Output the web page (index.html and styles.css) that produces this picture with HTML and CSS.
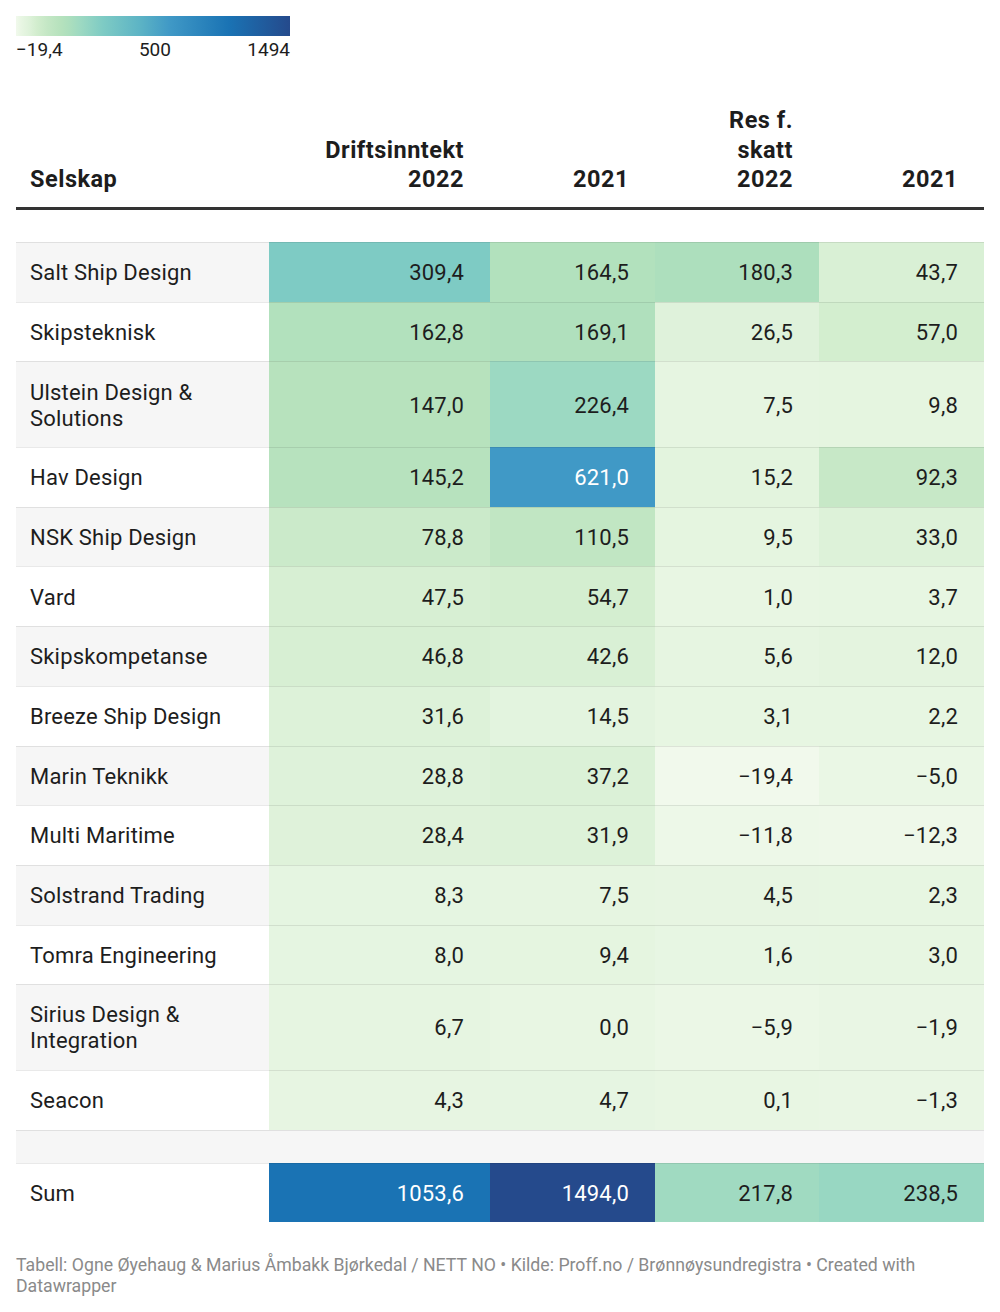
FILE: index.html
```html
<!DOCTYPE html>
<html lang="no">
<head>
<meta charset="utf-8">
<title>Skipsdesign – driftsinntekt og resultat</title>
<link rel="stylesheet" href="styles.css">
</head>
<body>
<div class="chart">
  <div class="legend">
    <div class="legend-bar"></div>
    <div class="legend-labels"><span>−19,4</span><span>500</span><span>1494</span></div>
  </div>

  <table class="heat">
    <colgroup>
      <col class="c-name"><col class="c-wide"><col class="c-num"><col class="c-num2"><col class="c-num">
    </colgroup>
    <thead>
      <tr>
        <th class="name">Selskap</th>
        <th class="num">Driftsinntekt<br>2022</th>
        <th class="num">2021</th>
        <th class="num">Res f.<br>skatt<br>2022</th>
        <th class="num">2021</th>
      </tr>
    </thead>
    <tbody>
      <tr class="gap"><td colspan="5"></td></tr>
      <tr class="alt"><td class="name">Salt Ship Design</td><td class="val" data-v="309.4">309,4</td><td class="val" data-v="164.5">164,5</td><td class="val" data-v="180.3">180,3</td><td class="val" data-v="43.7">43,7</td></tr>
      <tr><td class="name">Skipsteknisk</td><td class="val" data-v="162.8">162,8</td><td class="val" data-v="169.1">169,1</td><td class="val" data-v="26.5">26,5</td><td class="val" data-v="57.0">57,0</td></tr>
      <tr class="alt"><td class="name">Ulstein Design &amp;<br>Solutions</td><td class="val" data-v="147.0">147,0</td><td class="val" data-v="226.4">226,4</td><td class="val" data-v="7.5">7,5</td><td class="val" data-v="9.8">9,8</td></tr>
      <tr><td class="name">Hav Design</td><td class="val" data-v="145.2">145,2</td><td class="val" data-v="621.0">621,0</td><td class="val" data-v="15.2">15,2</td><td class="val" data-v="92.3">92,3</td></tr>
      <tr class="alt"><td class="name">NSK Ship Design</td><td class="val" data-v="78.8">78,8</td><td class="val" data-v="110.5">110,5</td><td class="val" data-v="9.5">9,5</td><td class="val" data-v="33.0">33,0</td></tr>
      <tr><td class="name">Vard</td><td class="val" data-v="47.5">47,5</td><td class="val" data-v="54.7">54,7</td><td class="val" data-v="1.0">1,0</td><td class="val" data-v="3.7">3,7</td></tr>
      <tr class="alt"><td class="name">Skipskompetanse</td><td class="val" data-v="46.8">46,8</td><td class="val" data-v="42.6">42,6</td><td class="val" data-v="5.6">5,6</td><td class="val" data-v="12.0">12,0</td></tr>
      <tr><td class="name">Breeze Ship Design</td><td class="val" data-v="31.6">31,6</td><td class="val" data-v="14.5">14,5</td><td class="val" data-v="3.1">3,1</td><td class="val" data-v="2.2">2,2</td></tr>
      <tr class="alt"><td class="name">Marin Teknikk</td><td class="val" data-v="28.8">28,8</td><td class="val" data-v="37.2">37,2</td><td class="val" data-v="-19.4">−19,4</td><td class="val" data-v="-5.0">−5,0</td></tr>
      <tr><td class="name">Multi Maritime</td><td class="val" data-v="28.4">28,4</td><td class="val" data-v="31.9">31,9</td><td class="val" data-v="-11.8">−11,8</td><td class="val" data-v="-12.3">−12,3</td></tr>
      <tr class="alt"><td class="name">Solstrand Trading</td><td class="val" data-v="8.3">8,3</td><td class="val" data-v="7.5">7,5</td><td class="val" data-v="4.5">4,5</td><td class="val" data-v="2.3">2,3</td></tr>
      <tr><td class="name">Tomra Engineering</td><td class="val" data-v="8.0">8,0</td><td class="val" data-v="9.4">9,4</td><td class="val" data-v="1.6">1,6</td><td class="val" data-v="3.0">3,0</td></tr>
      <tr class="alt"><td class="name">Sirius Design &amp;<br>Integration</td><td class="val" data-v="6.7">6,7</td><td class="val" data-v="0.0">0,0</td><td class="val" data-v="-5.9">−5,9</td><td class="val" data-v="-1.9">−1,9</td></tr>
      <tr><td class="name">Seacon</td><td class="val" data-v="4.3">4,3</td><td class="val" data-v="4.7">4,7</td><td class="val" data-v="0.1">0,1</td><td class="val" data-v="-1.3">−1,3</td></tr>
      <tr class="blank"><td colspan="5"></td></tr>
      <tr class="sum"><td class="name">Sum</td><td class="val" data-v="1053.6">1053,6</td><td class="val" data-v="1494.0">1494,0</td><td class="val" data-v="217.8">217,8</td><td class="val" data-v="238.5">238,5</td></tr>
    </tbody>
  </table>

  <div class="notes">Tabell: Ogne Øyehaug &amp; Marius Åmbakk Bjørkedal / NETT NO • Kilde: Proff.no / Brønnøysundregistra • Created with Datawrapper</div>
</div>
<script src="script.js"></script>
</body>
</html>
```

FILE: styles.css
```css
* { box-sizing: border-box; }

html, body {
  margin: 0;
  padding: 0;
  background: #ffffff;
}

body {
  font-family: Roboto, "Liberation Sans", Arial, sans-serif;
  color: #1d1d1d;
}

.chart {
  padding: 16px 16px 0 16px;
}

/* ---------- legend ---------- */
.legend {
  width: 274px;
}

.legend-bar {
  height: 20px;
  background: linear-gradient(to right,
    #f1f9ec 0%,
    #e8f6e3 1.9%,
    #def2da 4.8%,
    #d2edce 7.6%,
    #c4e7c5 11.5%,
    #b6e2bd 16.3%,
    #addfbd 19.2%,
    #9dd9c2 23.5%,
    #7ecbc4 31.7%,
    #5db4c5 45%,
    #4099c6 56%,
    #1a73b4 77.6%,
    #254a8c 100%);
}

.legend-labels {
  display: flex;
  justify-content: space-between;
  margin-top: 3px;
  font-size: 19px;
  line-height: 22px;
  color: #1d1d1d;
}

/* ---------- table ---------- */
.heat {
  width: 968px;
  margin-top: 45px;
  border-collapse: separate;
  border-spacing: 0;
  table-layout: fixed;
  font-size: 22px;
  line-height: 26px;
  letter-spacing: 0.2px;
}

.c-name { width: 253px; }
.c-wide { width: 221px; }
.c-num  { width: 165px; }
.c-num2 { width: 164px; }

.heat th {
  font-size: 23.5px;
  font-weight: 700;
  letter-spacing: 0.5px;
  line-height: 29.5px;
  vertical-align: bottom;
  padding: 0 26px 12px 14px;
  border-bottom: 3px solid #333333;
  color: #1d1d1d;
}

.heat th.name { text-align: left; }
.heat th.num { text-align: right; }

.heat td {
  padding: 17.2px 26px 15.5px 14px;
  border-top: 1px solid rgba(0, 0, 0, 0.085);
  vertical-align: middle;
}

.heat td.name {
  text-align: left;
}

.heat td.val {
  text-align: right;
}

.heat td.val.dark {
  color: #ffffff;
}

.heat tr.alt td.name {
  background: #f6f6f6;
}

.heat tr.gap td {
  height: 32.5px;
  padding: 0;
  border-top: 0;
}

.heat tr.blank td {
  height: 33px;
  padding: 0;
  background: #f6f6f6;
}

/* ---------- notes ---------- */
.notes {
  max-width: 940px;
  margin-top: 33px;
  font-size: 17.7px;
  line-height: 21px;
  color: #8a8a8a;
}
```

FILE: script.js
```js
(function () {
  var stops = [
    [-19.4, [241, 249, 236]],
    [0, [232, 246, 227]],
    [30, [222, 242, 218]],
    [60, [210, 237, 206]],
    [100, [196, 231, 197]],
    [150, [182, 226, 189]],
    [180, [173, 223, 189]],
    [225, [157, 217, 194]],
    [310, [126, 203, 196]],
    [620, [64, 153, 198]],
    [1050, [26, 115, 180]],
    [1494, [37, 74, 140]]
  ];

  function colorFor(v) {
    if (v <= stops[0][0]) return stops[0][1];
    for (var i = 1; i < stops.length; i++) {
      if (v <= stops[i][0]) {
        var a = stops[i - 1], b = stops[i];
        var t = (v - a[0]) / (b[0] - a[0]);
        return [0, 1, 2].map(function (k) {
          return Math.round(a[1][k] + (b[1][k] - a[1][k]) * t);
        });
      }
    }
    return stops[stops.length - 1][1];
  }

  var cells = document.querySelectorAll('td.val');
  for (var i = 0; i < cells.length; i++) {
    var v = parseFloat(cells[i].getAttribute('data-v'));
    var c = colorFor(v);
    cells[i].style.backgroundColor = 'rgb(' + c.join(',') + ')';
    if (v >= 500) cells[i].classList.add('dark');
  }
})();
```
